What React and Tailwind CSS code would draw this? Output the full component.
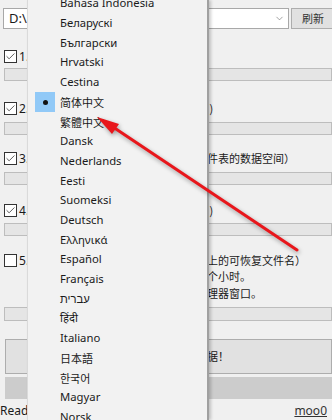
import { Check, ChevronDown } from "lucide-react"

const langs = [
    'Bahasa Indonesia', 'Беларускі', 'Български', 'Hrvatski', 'Cestina', '简体中文', '繁體中文',
    'Dansk', 'Nederlands', 'Eesti', 'Suomeksi', 'Deutsch', 'Ελληνικά', 'Español', 'Français',
    'עברית', 'हिंदी', 'Italiano', '日本語', '한국어', 'Magyar', 'Norsk',
]

const cjk = (s) => /[\u3000-\u9fff\uac00-\ud7af]/.test(s)

const Box = ({ checked }) => (
    <div className="w-[13px] h-[13px] shrink-0 bg-white border border-[#333] flex items-center justify-center">
        {checked && <Check size={11} strokeWidth={1.6} className="text-[#222]" />}
    </div>
)

const Bar = ({ top, h = 13 }) => (
    <div className={`ml-[4px] bg-[#e5e5e5] border border-[#bdbdbd] ${top} ${h === 14 ? 'h-[14px]' : 'h-[13px]'}`}></div>
)

const Option = ({ n, checked, top, lines }) => (
    <div className={`flex items-start pl-[4px] ${top}`}>
        <div className="w-[192px] flex items-center gap-[2px] h-[13px]">
            <Box checked={checked} />
            <span className="leading-[13px]">{n}.</span>
        </div>
        <div className="flex flex-col -mt-[2px] font-['Noto_Sans_CJK_SC',sans-serif] text-[11px] leading-[16.5px] whitespace-nowrap">
            {lines.map((l) => <span key={l}>{l}</span>)}
        </div>
    </div>
)

const App = () => {
    return (
        <div className="relative w-[332px] h-[420px] overflow-hidden bg-[#f0f0f0] font-['Noto_Sans',sans-serif] text-[12px] text-[#1a1a1a]">
            <div className="flex flex-col pt-[8px]">
                <div className="flex h-[21px] pl-[3px] gap-[2px]">
                    <div className="w-[286px] shrink-0 bg-white border border-[#a8a8a8] flex items-center justify-between pl-[5px] pr-[3px]">
                        <span className="text-[13px]">D:\</span>
                        <ChevronDown size={11} strokeWidth={1.3} className="text-[#666]" />
                    </div>
                    <div className="w-[45px] shrink-0 border border-[#adadad] bg-[#e1e1e1] flex items-center pl-[10px] font-['Noto_Sans_CJK_SC',sans-serif] text-[11px] text-[#333]">刷新</div>
                </div>

                <Option n={1} checked top="mt-[21px]" lines={['']} />
                <Bar top="mt-[5px]" />
                <Option n={2} checked top="mt-[21px]" lines={['间 )']} />
                <Bar top="mt-[5px]" />
                <Option n={3} checked top="mt-[17px]" lines={['文件表的数据空间）']} />
                <Bar top="mt-[6px]" />
                <Option n={4} checked top="mt-[19px]" lines={['间 )']} />
                <Bar top="mt-[4px]" />
                <Option n={5} top="mt-[18px]" lines={['盘上的可恢复文件名）', '几个小时。', '管理器窗口。']} />
                <Bar top="mt-[6px]" h={14} />

                <div className="ml-[5px] mt-[18px] h-[35px] bg-[#e1e1e1] border border-[#adadad] flex items-center pl-[190px] font-['Noto_Sans_CJK_SC',sans-serif] text-[11px]">数据！</div>
                <div className="ml-[5px] mt-[3px] h-[22px] bg-[#cccccc]"></div>

                <div className="flex justify-between items-center h-[22px] pr-[5px] pt-[2px]">
                    <span>Ready</span>
                    <span className="underline text-[#333]">moo0</span>
                </div>
            </div>

            {/* language menu */}
            <div className="absolute left-[27px] top-0 w-[182px] h-full bg-[#f2f2f2] border-l border-[#dadada] border-r-2 border-r-[#a0a0a0] shadow-[2px_0_3px_rgba(0,0,0,0.2)] text-[11.3px]">
                <div className="-mt-[6px] flex flex-col">
                    {langs.map((l) => (
                        <div key={l} className="flex items-center h-[19.7px] shrink-0">
                            <div className="w-[32px] flex justify-center pl-[2px]">
                                {l === '简体中文' && (
                                    <div className="w-[20px] h-[20px] bg-[#91c9f7] flex items-center justify-center">
                                        <div className="w-[5px] h-[5px] rounded-full bg-[#111]"></div>
                                    </div>
                                )}
                            </div>
                            <span className={cjk(l) ? "font-['Noto_Sans_CJK_SC','Noto_Sans_CJK_KR',sans-serif] text-[11px]" : ''}>{l}</span>
                        </div>
                    ))}
                </div>
            </div>

            {/* red arrow */}
            <svg className="absolute inset-0 drop-shadow-[1px_2px_2px_rgba(0,0,0,0.35)]" width="332" height="420">
                <line x1="297" y1="250" x2="110" y2="125" stroke="#e8161b" strokeWidth="3" strokeLinecap="round" />
                <polygon points="97,117 112,134 119,124" fill="#e8161b" />
            </svg>
        </div>
    )
}

export default App
